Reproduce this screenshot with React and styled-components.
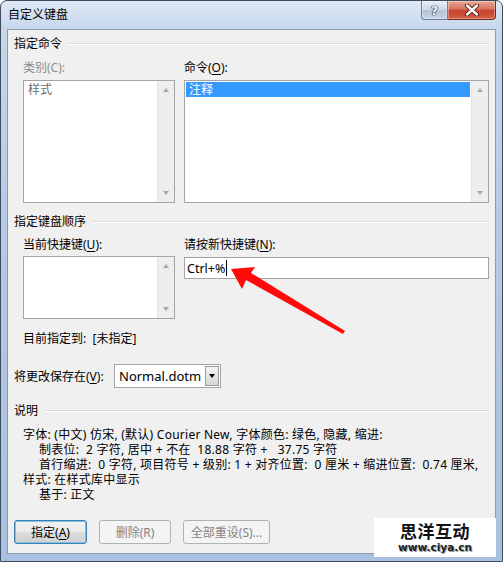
import React from 'react';
import styled, { createGlobalStyle } from 'styled-components';

const uiFont = `"Noto Sans", "Noto Sans CJK SC", sans-serif`;

const GlobalStyle = createGlobalStyle`
  html, body {
    margin: 0;
    padding: 0;
    background: #ffffff;
  }
`;

// ventana con marco tipo Aero
const Window = styled.div`
  position: relative;
  box-sizing: border-box;
  width: 503px;
  height: 562px;
  display: flex;
  flex-direction: column;
  padding: 0 6px 7px 6px;
  border: 1px solid #3d4b5d;
  border-radius: 7px 7px 0 0;
  background: linear-gradient(180deg, #dfe9f5 0%, #c6d7ec 5%, #b4cae5 40%, #a9c1e0 100%);
  font-family: ${uiFont};
  font-size: 12px;
  color: #000;
  overflow: hidden;
`;

const TitleBar = styled.div`
  height: 28px;
  display: flex;
  align-items: flex-start;
  justify-content: space-between;
`;

const Title = styled.div`
  line-height: 28px;
  padding-left: 1px;
  color: #000;
`;

const CaptionButtons = styled.div`
  display: flex;
`;

const CaptionButton = styled.div`
  box-sizing: border-box;
  width: ${({ w }) => w}px;
  height: 19px;
  display: flex;
  align-items: center;
  justify-content: center;
  border: 1px solid ${({ close }) => (close ? '#6e2b1f' : '#6b7d94')};
  border-top: none;
  border-left: ${({ close }) => (close ? 'none' : undefined)};
  border-radius: ${({ close }) => (close ? '0 0 4px 0' : '0 0 0 4px')};
  background: ${({ close }) =>
    close
      ? 'linear-gradient(180deg, #eaa797 0%, #d9725d 45%, #c6442b 52%, #d35c42 100%)'
      : 'linear-gradient(180deg, #e6edf6 0%, #cdd8e6 48%, #b4c3d7 52%, #c7d4e5 100%)'};
  box-shadow: inset 0 0 0 1px rgba(255, 255, 255, 0.35);
`;

const HelpGlyph = styled.span`
  font-family: "DejaVu Sans", sans-serif;
  font-weight: bold;
  font-size: 13px;
  line-height: 13px;
  color: #f4f6f8;
  text-shadow: 0 0 1px #1d2a3a, 0 0 1px #1d2a3a, 0 0 1px #1d2a3a;
`;

const Client = styled.div`
  position: relative;
  flex: 1;
  display: flex;
  flex-direction: column;
  padding: 6px 5px 0 6px;
  border: 1px solid #8a9bb1;
  background: #f0f0f0;
`;

const GroupHeader = styled.div`
  display: flex;
  align-items: center;
  height: 16px;
  line-height: 16px;
  margin-top: ${({ top }) => top || 0}px;
`;

const GroupLine = styled.div`
  flex: 1;
  margin-left: 6px;
  border-top: 1px solid #d5dfe5;
  border-bottom: 1px solid #ffffff;
`;

const Indent = styled.div`
  margin-left: 9px;
  margin-top: ${({ top }) => top || 0}px;
`;

const Columns = styled.div`
  display: flex;
  gap: 9px;
  margin-top: ${({ top }) => top || 0}px;
`;

const Column = styled.div`
  width: ${({ w }) => w}px;
  display: flex;
  flex-direction: column;
`;

const FieldLabel = styled.div`
  height: 16px;
  line-height: 16px;
  margin-bottom: ${({ gap }) => gap}px;
  color: ${({ disabled }) => (disabled ? '#8d8d8d' : '#000')};
  white-space: nowrap;
`;

const Key = styled.span`
  text-decoration: underline;
  text-underline-offset: 2px;
`;

const ListBox = styled.div`
  box-sizing: border-box;
  height: ${({ h }) => h}px;
  display: flex;
  border: 1px solid #a5a5a5;
  background: #ffffff;
`;

const ListItems = styled.div`
  flex: 1;
  padding: 1px 1px 0 1px;
`;

const ListItem = styled.div`
  height: 15px;
  line-height: 15px;
  padding-left: 3px;
  background: ${({ selected }) => (selected ? '#3399ff' : 'transparent')};
  color: ${({ selected, disabled }) => (selected ? '#ffffff' : disabled ? '#6d6d6d' : '#000')};
`;

const ScrollBar = styled.div`
  width: 16px;
  display: flex;
  flex-direction: column;
  justify-content: space-between;
  align-items: center;
  padding: 7px 0;
  border-left: 1px solid #e6e6e6;
  background: #eeeeee;
`;

const Arrow = styled.div`
  width: 0;
  height: 0;
  border-left: 3.5px solid transparent;
  border-right: 3.5px solid transparent;
  ${({ up }) => (up ? 'border-bottom' : 'border-top')}: 4px solid #a8a8a8;
`;

const TextInput = styled.div`
  box-sizing: border-box;
  height: 22px;
  margin-top: 1px;
  display: flex;
  align-items: center;
  padding-left: 2px;
  border: 1px solid #a5a5a5;
  background: #ffffff;
  font-size: 12.5px;
`;

const Caret = styled.span`
  display: inline-block;
  width: 1px;
  height: 16px;
  margin-left: 1px;
  background: #000;
`;

const PlainRow = styled.div`
  height: 16px;
  line-height: 16px;
  margin-left: 9px;
  margin-top: 12px;
  white-space: pre;
`;

const SaveRow = styled.div`
  display: flex;
  align-items: center;
  margin-top: 17px;
`;

const SaveLabel = styled.div`
  width: 100px;
  white-space: nowrap;
`;

const Select = styled.div`
  box-sizing: border-box;
  width: 107px;
  height: 24px;
  display: flex;
  align-items: center;
  justify-content: space-between;
  padding: 1px;
  border: 1px solid #a5a5a5;
  background: #ffffff;
`;

const SelectText = styled.span`
  padding-left: 3px;
  font-size: 13px;
`;

const DropButton = styled.div`
  box-sizing: border-box;
  width: 14px;
  height: 20px;
  display: flex;
  align-items: center;
  justify-content: center;
  border: 1px solid #9a9a9a;
  background: linear-gradient(180deg, #f4f4f4 0%, #e6e6e6 50%, #d6d6d6 100%);
`;

const DropTriangle = styled.div`
  width: 0;
  height: 0;
  border-left: 3.5px solid transparent;
  border-right: 3.5px solid transparent;
  border-top: 4px solid #000;
`;

const Description = styled.div`
  margin-left: 9px;
  margin-top: 8px;
`;

const DescLine = styled.div`
  height: 15px;
  line-height: 15px;
  padding-left: ${({ sub }) => (sub ? 16 : 0)}px;
  letter-spacing: 0.25px;
  white-space: pre;
`;

const ButtonRow = styled.div`
  display: flex;
  gap: 12px;
  margin-top: 18px;
`;

const Button = styled.div`
  box-sizing: border-box;
  width: ${({ w }) => w}px;
  height: 24px;
  display: flex;
  align-items: center;
  justify-content: center;
  border-radius: 3px;
  border: 1px solid ${({ primary, disabled }) => (primary ? '#3c7fb1' : disabled ? '#adb2b5' : '#707070')};
  background: ${({ disabled }) =>
    disabled
      ? '#f4f4f4'
      : 'linear-gradient(180deg, #f2f2f2 0%, #ebebeb 48%, #dddddd 52%, #cfcfcf 100%)'};
  box-shadow: ${({ primary }) => (primary ? 'inset 0 0 0 1px #7ec2ec' : 'none')};
  color: ${({ disabled }) => (disabled ? '#838383' : '#000')};
`;

const Watermark = styled.div`
  position: absolute;
  right: 6px;
  bottom: 4px;
  width: 122px;
  height: 39px;
  display: flex;
  flex-direction: column;
  align-items: center;
  justify-content: center;
  gap: 1px;
  background: #ffffff;
`;

const WatermarkTitle = styled.div`
  font-family: "Noto Sans CJK SC", sans-serif;
  font-weight: 700;
  font-size: 17px;
  line-height: 19px;
  letter-spacing: 0.5px;
  color: #111;
`;

const WatermarkUrl = styled.div`
  font-family: "DejaVu Sans", sans-serif;
  font-weight: bold;
  font-size: 10.5px;
  line-height: 13px;
  color: #222;
  text-shadow: 1px 1px 0 #9a9a9a;
`;

const Overlay = styled.svg`
  position: absolute;
  left: 0;
  top: 0;
  pointer-events: none;
`;

const CloseIcon = () => (
  <svg width="16" height="12" viewBox="0 0 16 12">
    <path d="M3 1.5 L13 10.5 M13 1.5 L3 10.5" stroke="#4a150c" strokeWidth="4.2" strokeLinecap="round" />
    <path d="M3 1.5 L13 10.5 M13 1.5 L3 10.5" stroke="#ffffff" strokeWidth="2.4" strokeLinecap="round" />
  </svg>
);

const ScrollList = ({ h, children }) => (
  <ListBox h={h}>
    <ListItems>{children}</ListItems>
    <ScrollBar>
      <Arrow up />
      <Arrow />
    </ScrollBar>
  </ListBox>
);

const App = () => (
  <>
    <GlobalStyle />
    <Window>
      <TitleBar>
        <Title>自定义键盘</Title>
        <CaptionButtons>
          <CaptionButton w={27}>
            <HelpGlyph>?</HelpGlyph>
          </CaptionButton>
          <CaptionButton w={48} close>
            <CloseIcon />
          </CaptionButton>
        </CaptionButtons>
      </TitleBar>

      <Client>
        <GroupHeader>
          指定命令
          <GroupLine />
        </GroupHeader>
        <Indent>
          <Columns top={8}>
            <Column w={152}>
              <FieldLabel gap={4} disabled>类别(C):</FieldLabel>
              <ScrollList h={123}>
                <ListItem disabled>样式</ListItem>
              </ScrollList>
            </Column>
            <Column w={305}>
              <FieldLabel gap={4}>
                命令(<Key>O</Key>):
              </FieldLabel>
              <ScrollList h={123}>
                <ListItem selected>注释</ListItem>
              </ScrollList>
            </Column>
          </Columns>
        </Indent>

        <GroupHeader top={11}>
          指定键盘顺序
          <GroupLine />
        </GroupHeader>
        <Indent>
          <Columns top={7}>
            <Column w={152}>
              <FieldLabel gap={3}>
                当前快捷键(<Key>U</Key>):
              </FieldLabel>
              <ScrollList h={63} />
            </Column>
            <Column w={305}>
              <FieldLabel gap={3}>
                请按新快捷键(<Key>N</Key>):
              </FieldLabel>
              <TextInput>
                Ctrl+%
                <Caret />
              </TextInput>
            </Column>
          </Columns>
        </Indent>
        <PlainRow>目前指定到:  [未指定]</PlainRow>

        <SaveRow>
          <SaveLabel>
            将更改保存在(<Key>V</Key>):
          </SaveLabel>
          <Select>
            <SelectText>Normal.dotm</SelectText>
            <DropButton>
              <DropTriangle />
            </DropButton>
          </Select>
        </SaveRow>

        <GroupHeader top={15}>
          说明
          <GroupLine />
        </GroupHeader>
        <Description>
          <DescLine>字体: (中文) 仿宋, (默认) Courier New, 字体颜色: 绿色, 隐藏, 缩进:</DescLine>
          <DescLine sub>制表位:  2 字符, 居中 + 不在  18.88 字符 +   37.75 字符</DescLine>
          <DescLine sub>首行缩进:  0 字符, 项目符号 + 级别: 1 + 对齐位置:  0 厘米 + 缩进位置:  0.74 厘米,</DescLine>
          <DescLine>样式: 在样式库中显示</DescLine>
          <DescLine sub>基于: 正文</DescLine>
        </Description>

        <ButtonRow>
          <Button w={73} primary>
            指定(<Key>A</Key>)
          </Button>
          <Button w={72} disabled>删除(R)</Button>
          <Button w={87} disabled>全部重设(S)...</Button>
        </ButtonRow>
      </Client>

      <Watermark>
        <WatermarkTitle>思洋互动</WatermarkTitle>
        <WatermarkUrl>www.ciya.cn</WatermarkUrl>
      </Watermark>

      <Overlay width="503" height="562" viewBox="0 0 503 562">
        <polygon
          points="230,268 254,266 250,272 344,330 342,333 245,279 241,288"
          fill="#ff0b0b"
        />
      </Overlay>
    </Window>
  </>
);

export default App;
